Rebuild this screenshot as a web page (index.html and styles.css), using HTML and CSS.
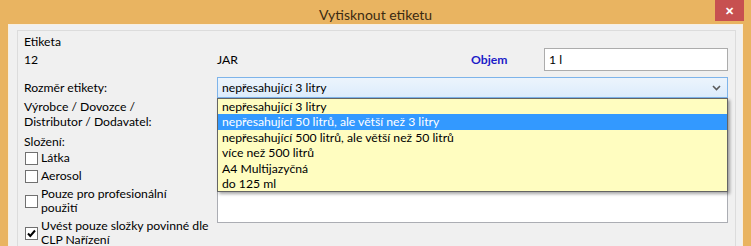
FILE: index.html
```html
<!DOCTYPE html>
<html lang="cs">
<head>
    <meta charset="UTF-8">
    <title>Vytisknout etiketu</title>
    <link rel="stylesheet" href="styles.css">
</head>
<body>
    <div class="win-window">
        <div class="win-titlebar">
            <span class="win-title">Vytisknout etiketu</span>
            <button class="win-close">&#x2715;</button>
        </div>

        <div class="win-client">
            <div class="win-panel">
                <div class="panel-caption">Etiketa</div>

                <div class="form-row row-info">
                    <span class="cell-label">12</span>
                    <span class="cell-code">JAR</span>
                    <span class="cell-objem">Objem</span>
                    <input class="win-input" type="text" value="1 l">
                </div>

                <div class="form-row row-size">
                    <span class="cell-label">Rozměr etikety:</span>
                    <div class="win-combo">
                        <span class="combo-text">nepřesahující 3 litry</span>
                        <svg class="combo-arrow" width="9" height="6" viewBox="0 0 9 6">
                            <path d="M1 1 L4.5 4.5 L8 1" fill="none" stroke="#5a5a5a" stroke-width="1.6"/>
                        </svg>

                        <!-- open dropdown list -->
                        <ul class="combo-list">
                            <li>nepřesahující 3 litry</li>
                            <li class="selected">nepřesahující 50 litrů, ale větší než 3 litry</li>
                            <li>nepřesahující 500 litrů, ale větší než 50 litrů</li>
                            <li>více než 500 litrů</li>
                            <li>A4 Multijazyčná</li>
                            <li>do 125 ml</li>
                        </ul>
                    </div>
                </div>

                <div class="form-row row-maker">
                    <div class="left-col">
                        <div class="cell-label">Výrobce / Dovozce /<br>Distributor / Dodavatel:</div>
                        <div class="cell-label label-slozeni">Složení:</div>
                        <label class="win-check"><span class="check-box"></span><span>Látka</span></label>
                        <label class="win-check"><span class="check-box"></span><span>Aerosol</span></label>
                        <label class="win-check"><span class="check-box"></span><span>Pouze pro profesionální<br>použití</span></label>
                        <label class="win-check"><span class="check-box">
                            <svg width="11" height="11" viewBox="0 0 11 11"><path d="M2 5.5 L4.3 8 L9 2.5" fill="none" stroke="#000" stroke-width="2"/></svg>
                        </span><span>Uvést pouze složky povinné dle<br>CLP Nařízení</span></label>
                    </div>
                    <div class="win-memo"></div>
                </div>
            </div>
        </div>
    </div>
</body>
</html>
```

FILE: styles.css
```css
* {
    margin: 0;
    padding: 0;
    box-sizing: border-box;
}

body {
    background: #e9b461;
    font-family: Lato, "Noto Sans", sans-serif;
    font-size: 12.2px;
    line-height: 15px;
    color: #000;
    overflow: hidden;
}

.win-window {
    width: 751px;
    height: 246px;
    display: flex;
    flex-direction: column;
}

.win-titlebar {
    height: 25px;
    position: relative;
    display: flex;
    justify-content: center;
    align-items: center;
}

.win-title {
    font-size: 14px;
    line-height: 18px;
    color: #3b2a12;
    padding-top: 6px;
}

.win-close {
    position: absolute;
    top: 0;
    right: 7px;
    width: 29px;
    height: 21px;
    border: none;
    background: #c75050;
    color: #fff;
    font-family: "Noto Sans", sans-serif;
    font-size: 11px;
    font-weight: bold;
    line-height: 21px;
}

.win-client {
    flex: 1;
    margin: 0 8px;
    background: #f0f0f0;
    border: 1px solid #f8efe0;
    border-bottom: none;
    padding: 5px 6px 0 8px;
}

.win-panel {
    border: 1px solid #dcdcdc;
    border-bottom: none;
    height: 100%;
    padding: 3px 6px 0;
}

.panel-caption {
    height: 15px;
}

.form-row {
    display: flex;
    align-items: center;
}

.cell-label {
    width: 193px;
}

.row-info {
    height: 23px;
    margin-top: -1px;
}

.cell-code {
    width: 254px;
}

.cell-objem {
    width: 73px;
    color: #1c1cc8;
    font-weight: bold;
}

.win-input {
    width: 184px;
    height: 23px;
    border: 1px solid #acacac;
    background: #fff;
    font-family: inherit;
    font-size: 12.2px;
    padding: 0 4px;
    outline: none;
}

.row-size {
    margin-top: 6px;
    height: 21px;
}

.win-combo {
    position: relative;
    width: 511px;
    height: 21px;
    border: 1px solid #7eb4ea;
    background: linear-gradient(#ecf4fc, #dcecfc);
    display: flex;
    align-items: center;
    justify-content: space-between;
    padding: 0 6px 0 4px;
}

.combo-list {
    position: absolute;
    top: 20px;
    left: -1px;
    width: 511px;
    list-style: none;
    background: #fffdc0;
    border: 1px solid #646464;
    box-shadow: 2px 2px 3px rgba(0, 0, 0, 0.35);
    z-index: 10;
}

.combo-list li {
    height: 15.4px;
    line-height: 15px;
    padding-left: 4px;
    white-space: nowrap;
}

.combo-list li.selected {
    background: #3399ff;
    color: #fff;
}

.row-maker {
    align-items: flex-start;
}

.left-col {
    width: 193px;
    padding-top: 1px;
}

.label-slozeni {
    margin-top: 5px;
}

.win-check {
    display: flex;
    align-items: center;
    gap: 3px;
    line-height: 14px;
    padding: 2px 0;
}

.check-box {
    width: 13px;
    height: 13px;
    border: 1px solid #707070;
    background: #fff;
    flex-shrink: 0;
    display: flex;
    align-items: center;
    justify-content: center;
    margin-left: 1px;
}

.win-memo {
    width: 511px;
    height: 125px;
    border: 1px solid #abadb3;
    background: #fff;
}
```
